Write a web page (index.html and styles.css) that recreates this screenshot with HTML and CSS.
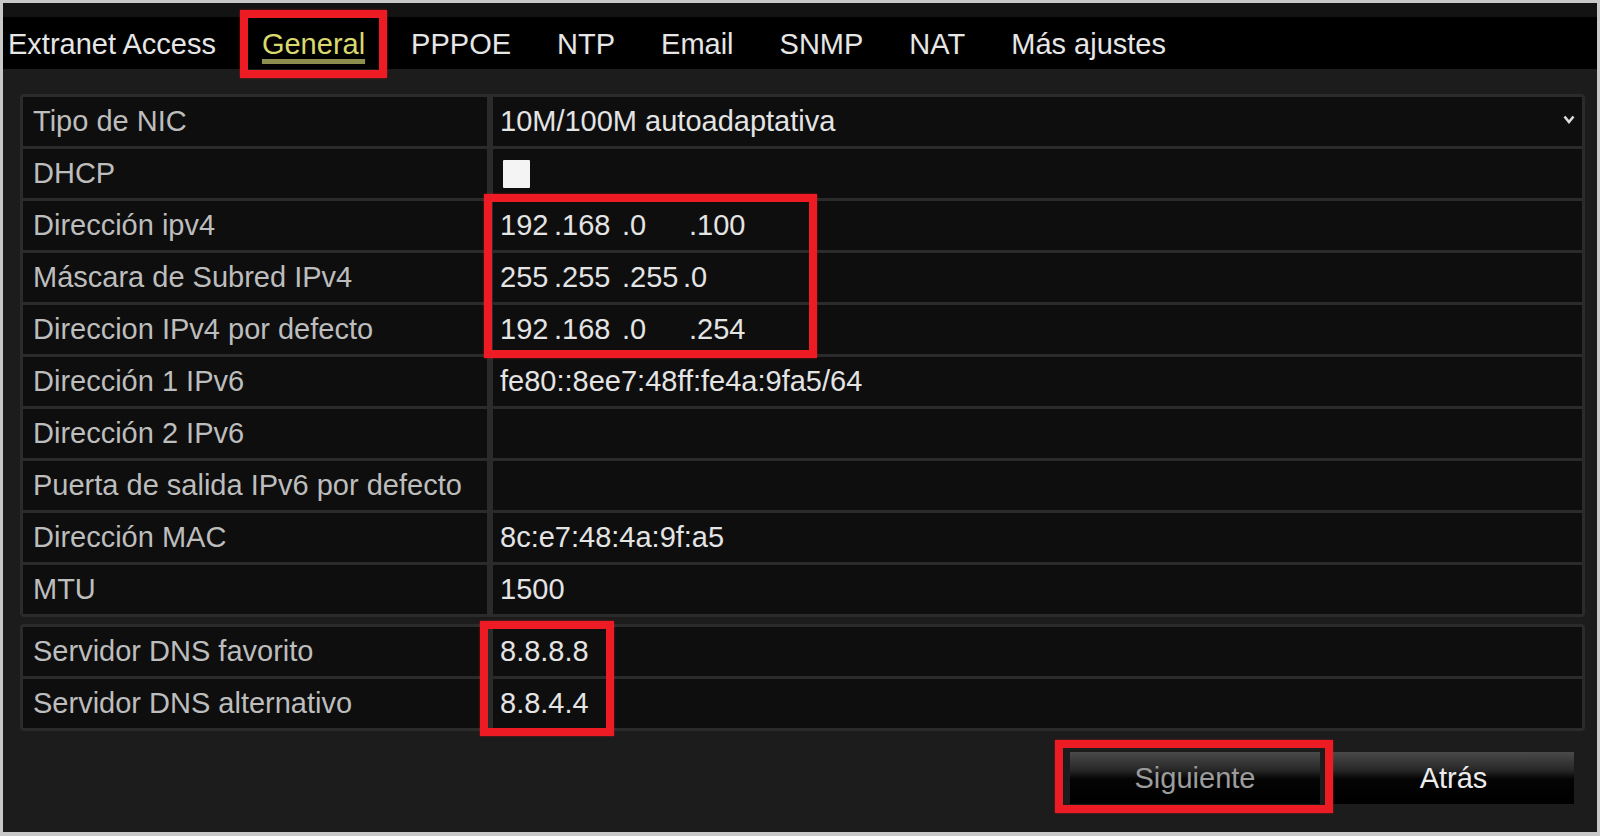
FILE: index.html
```html
<!DOCTYPE html>
<html lang="es">
<head>
    <meta charset="UTF-8">
    <meta name="viewport" content="width=device-width, initial-scale=1.0">
    <title>Configuración de red</title>
    <link rel="stylesheet" href="styles.css">
</head>
<body>
    <div class="screen">
        <div class="top-strip"></div>
        <nav class="tabs">
            <span class="tab">Extranet Access</span>
            <span class="tab active">General</span>
            <span class="tab">PPPOE</span>
            <span class="tab">NTP</span>
            <span class="tab">Email</span>
            <span class="tab">SNMP</span>
            <span class="tab">NAT</span>
            <span class="tab">Más ajustes</span>
        </nav>
        <div class="panel">
            <div class="settings-table">
                <div class="row">
                    <div class="label">Tipo de NIC</div>
                    <div class="value select">
                        <span>10M/100M autoadaptativa</span>
                        <svg class="caret" width="12" height="9" viewBox="0 0 12 9"><path d="M1.5 1.5 L6 7 L10.5 1.5" fill="none" stroke="#dcdcdc" stroke-width="2.6"/></svg>
                    </div>
                </div>
                <div class="row">
                    <div class="label">DHCP</div>
                    <div class="value"><span class="check"></span></div>
                </div>
                <div class="row">
                    <div class="label">Dirección ipv4</div>
                    <div class="value">
                        <span class="oct oct-1">192</span><span class="oct oct-2">.168</span><span class="oct oct-3">.0</span><span class="oct">.100</span>
                    </div>
                </div>
                <div class="row">
                    <div class="label">Máscara de Subred IPv4</div>
                    <div class="value">
                        <span class="oct oct-1">255</span><span class="oct oct-2">.255</span><span class="oct oct-3 oct-tight">.255</span><span class="oct">.0</span>
                    </div>
                </div>
                <div class="row">
                    <div class="label">Direccion IPv4 por defecto</div>
                    <div class="value">
                        <span class="oct oct-1">192</span><span class="oct oct-2">.168</span><span class="oct oct-3">.0</span><span class="oct">.254</span>
                    </div>
                </div>
                <div class="row">
                    <div class="label">Dirección 1 IPv6</div>
                    <div class="value">fe80::8ee7:48ff:fe4a:9fa5/64</div>
                </div>
                <div class="row">
                    <div class="label">Dirección 2 IPv6</div>
                    <div class="value"></div>
                </div>
                <div class="row">
                    <div class="label">Puerta de salida IPv6 por defecto</div>
                    <div class="value"></div>
                </div>
                <div class="row">
                    <div class="label">Dirección MAC</div>
                    <div class="value">8c:e7:48:4a:9f:a5</div>
                </div>
                <div class="row">
                    <div class="label">MTU</div>
                    <div class="value">1500</div>
                </div>
            </div>

            <div class="settings-table">
                <div class="row">
                    <div class="label">Servidor DNS favorito</div>
                    <div class="value">8.8.8.8</div>
                </div>
                <div class="row">
                    <div class="label">Servidor DNS alternativo</div>
                    <div class="value">8.8.4.4</div>
                </div>
            </div>

            <div class="actions">
                <button class="btn btn-next">Siguiente</button>
                <button class="btn btn-back">Atrás</button>
            </div>
        </div>

        <!-- red highlight frames drawn over the screenshot -->
        <div class="mark mark-tab"></div>
        <div class="mark mark-ipv4"></div>
        <div class="mark mark-dns"></div>
        <div class="mark mark-next"></div>
    </div>
</body>
</html>
```

FILE: styles.css
```css
* {
    box-sizing: border-box;
}

html, body {
    margin: 0;
}

body {
    background: #c8c8c8;
    font-family: "Liberation Sans", Arial, sans-serif;
}

.screen {
    position: relative;
    width: 1600px;
    height: 836px;
    padding: 3px 3px 4px 3px;
    display: flex;
    flex-direction: column;
    background: #c8c8c8;
    overflow: hidden;
}

.top-strip {
    height: 14px;
    background: #131313;
}

.tabs {
    height: 52px;
    background: #000;
    display: flex;
    align-items: center;
    gap: 46px;
    padding: 3px 0 0 5px;
    font-size: 29px;
    color: #e6e6e6;
}

.tab {
    line-height: 29px;
    white-space: nowrap;
}

.tab.active {
    color: #d9d96c;
    text-decoration: underline;
    text-decoration-color: #8e8e4e;
    text-decoration-thickness: 5px;
    text-underline-offset: 5px;
}

.panel {
    flex: 1;
    background: #1c1c1c;
    padding: 25px 12px 0 17px;
    display: flex;
    flex-direction: column;
}

.settings-table {
    background: #2b2b2b;
    border-radius: 4px;
    padding: 3px;
    display: flex;
    flex-direction: column;
    gap: 3px;
}

.settings-table + .settings-table {
    margin-top: 7px;
}

.row {
    display: grid;
    grid-template-columns: 464px 1fr;
    column-gap: 6px;
    height: 49px;
}

.label, .value {
    background: #0e0e0e;
    display: flex;
    align-items: center;
    font-size: 29px;
    white-space: nowrap;
}

.label {
    padding-left: 10px;
    color: #bdbdbd;
}

.value {
    padding: 0 7px;
    color: #e4e4e4;
}

.select {
    justify-content: space-between;
}

.caret {
    margin-top: -4px;
}

.check {
    width: 27px;
    height: 28px;
    margin-left: 3px;
    background: #f4f4f4;
    border-radius: 1px;
}

.oct {
    flex-shrink: 0;
}

.oct-1 {
    width: 54px;
}

.oct-2 {
    width: 68px;
}

.oct-3 {
    width: 67px;
}

.oct-3.oct-tight {
    width: 61px;
}

.actions {
    display: flex;
    justify-content: flex-end;
    gap: 13px;
    margin-top: 21px;
    padding-right: 11px;
}

.btn {
    height: 52px;
    border: 0;
    padding: 0;
    font: 29px "Liberation Sans", Arial, sans-serif;
    color: #ececec;
    background: linear-gradient(#4a4a4a, #272727 35%, #040404 52%, #000);
}

.btn-next {
    width: 250px;
    color: #9c9c9c;
}

.btn-back {
    width: 241px;
}

.mark {
    position: absolute;
    border: 8px solid #ec1b24;
    box-shadow: 0 0 2px rgba(236, 27, 36, 0.6);
}

.mark-tab {
    left: 240px;
    top: 10px;
    width: 147px;
    height: 68px;
}

.mark-ipv4 {
    left: 484px;
    top: 194px;
    width: 333px;
    height: 164px;
}

.mark-dns {
    left: 480px;
    top: 621px;
    width: 134px;
    height: 115px;
}

.mark-next {
    left: 1055px;
    top: 740px;
    width: 278px;
    height: 73px;
}
```
